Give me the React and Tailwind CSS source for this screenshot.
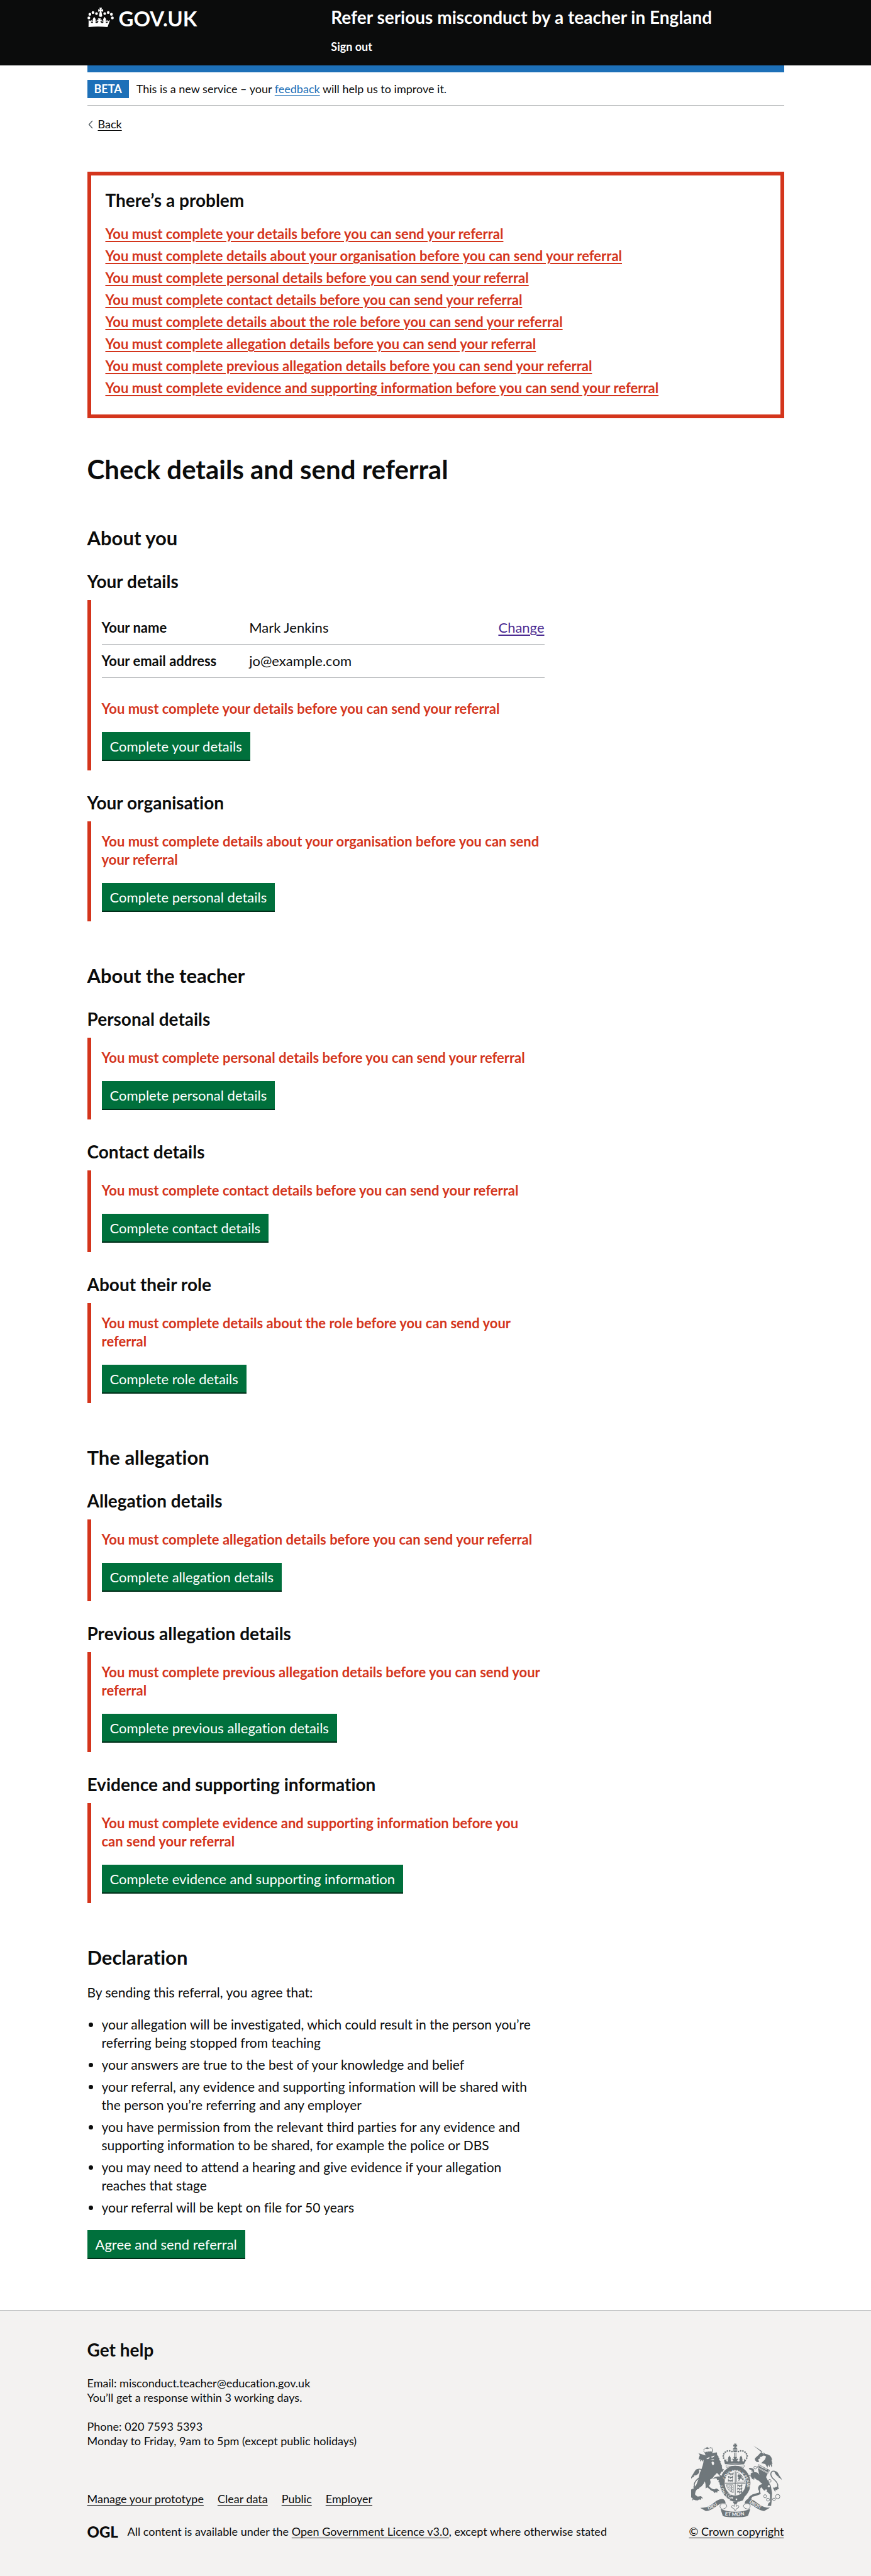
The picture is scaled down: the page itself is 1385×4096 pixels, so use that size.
import React from 'react';

const errors = [
  'You must complete your details before you can send your referral',
  'You must complete details about your organisation before you can send your referral',
  'You must complete personal details before you can send your referral',
  'You must complete contact details before you can send your referral',
  'You must complete details about the role before you can send your referral',
  'You must complete allegation details before you can send your referral',
  'You must complete previous allegation details before you can send your referral',
  'You must complete evidence and supporting information before you can\u00a0send your referral',
];

const sections = [
  {
    title: 'About you',
    parts: [
      {
        id: 'your-details',
        title: 'Your details',
        rows: [
          { key: 'Your name', value: 'Mark Jenkins', change: true },
          { key: 'Your email address', value: 'jo@example.com' },
        ],
        error: errors[0],
        action: 'Complete your details',
      },
      { id: 'your-organisation', title: 'Your organisation', error: errors[1], action: 'Complete personal details' },
    ],
  },
  {
    title: 'About the teacher',
    parts: [
      { id: 'personal-details', title: 'Personal details', error: errors[2], action: 'Complete personal details' },
      { id: 'contact-details', title: 'Contact details', error: errors[3], action: 'Complete contact details' },
      { id: 'their-role', title: 'About their role', error: errors[4], action: 'Complete role details' },
    ],
  },
  {
    title: 'The allegation',
    parts: [
      { id: 'allegation-details', title: 'Allegation details', error: errors[5], action: 'Complete allegation details' },
      { id: 'previous-allegation', title: 'Previous allegation details', error: errors[6], action: 'Complete previous allegation details' },
      { id: 'evidence', title: 'Evidence and supporting information', error: errors[7], action: 'Complete evidence and supporting information' },
    ],
  },
];

const partIds = sections.flatMap((section) => section.parts.map((part) => part.id));

const declarations = [
  'your allegation will be investigated, which could result in the person you’re referring being stopped from teaching',
  'your answers are true to the best of your knowledge and belief',
  'your referral, any evidence and supporting information will be shared with the person you’re referring and any employer',
  'you have permission from the relevant third parties for any evidence and supporting information to be shared, for example the police or DBS',
  'you may need to attend a hearing and give evidence if your allegation reaches that stage',
  'your referral will be kept on file for 50 years',
];

function Container({ className = '', children }) {
  return <div className={`mx-auto w-full max-w-[1140px] px-4 ${className}`}>{children}</div>;
}

function Crown() {
  return (
    <svg viewBox="60 62 216 161" className="h-[31px] w-[42px] shrink-0" fill="currentColor" aria-hidden="true">
      <g>
        <circle cx="71" cy="148" r="11.5" />
        <circle cx="79" cy="118" r="11.5" />
        <circle cx="105" cy="103" r="11.5" />
        <circle cx="134" cy="112" r="11" />
        <circle cx="202" cy="112" r="11" />
        <circle cx="231" cy="103" r="11.5" />
        <circle cx="257" cy="118" r="11.5" />
        <circle cx="265" cy="148" r="11.5" />
      </g>
      <path d="M158 63h21l-5 17 15-5v22l-15-5 7 35c1 8-5 12-13 12s-14-4-13-12l7-35-14 5V75l15 5z" />
      <path d="M69 164l14 10 9-10 4 14-9 4c6 10 14 11 18 2l1-6-10 2v-12l9 3c-1-9-5-10 1-18l9-14 9 14c6 8 2 9 1 18l9-3v12l-10-2 1 6c5 9 18 8 22-1l4-12-12 6v-16l12 5-5-15h24l-5 15 12-5v16l-12-6 4 12c4 9 17 10 22 1l1-6-10 2v-12l9 3c-1-9-5-10 1-18l9-14 9 14c6 8 2 9 1 18l9-3v12l-10-2 1 6c4 9 12 8 18-2l-9-4 4-14 9 10 13-10-21 59c-51-6-106-6-157 0z" />
    </svg>
  );
}

/* Bodies of the small lions passant in the first and last quarters of the shield. */
function Lion({ x, y }) {
  return (
    <path
      transform={`translate(${x} ${y})`}
      d="M2 6l7-5 7 4 5 3h16l2-6 8-3-2 6 3 9-5 2 2 9-6-1-2-6-9-1-3 8-6-1 1-8-7-4-2 8-6-1 3-9z"
    />
  );
}

function RoyalArms() {
  return (
    <svg viewBox="312 244 752 616" className="h-[118px] w-36 font-[Lato] font-bold" fill="#6f777b" aria-hidden="true">
      <defs>
        <path id="garter" d="M612 678a98 110 0 1 1 132 0" />
        <path id="scroll-left" d="M456 796q50-16 100-60" />
        <path id="scroll-middle" d="M592 842q86 14 174 -3" />
        <path id="scroll-right" d="M792 733q60 46 122 64" />
      </defs>

      {/* imperial crown */}
      <path d="M668 246h20l-4 12 10-4v18l-10-4 4 11h-20l4-11-10 4v-18l10 4z" />
      <path d="M659 296a18 16 0 0 1 37 0zM659 302h37l-6 16h-24zM668 322h6v38h-6zM681 322h6v38h-6z" />
      <g>
        {[[651, 312], [632, 307], [613, 308], [596, 317], [584, 331], [579, 349], [582, 367], [704, 312], [723, 307], [742, 308], [759, 317], [771, 331], [777, 349], [773, 367]].map(([cx, cy]) => (
          <circle key={`${cx}-${cy}`} cx={cx} cy={cy} r="7" />
        ))}
      </g>
      <path d="M583 376l12 6 8-10 2 18c4 8 14 6 14-4l-7-8 10-1-4-10 12-22 12 22-4 10 10 1-7 8c2 10 14 12 22 2l-8-5v-12l14 5-6-18h30l-6 18 14-5v12l-8 5c8 10 20 8 22-2l-7-8 10-1-4-10 12-22 12 22-4 10 10 1-7 8c0 10 10 12 14 4l2-18 8 10 12-6-22 42c-52-5-106-5-158 0z" />
      <path d="M606 424c45-8 98-8 144 0 6 8 4 16-4 20-44-14-94-14-138 0-8-4-8-14-2-20z" fill="none" stroke="#6f777b" strokeWidth="5" />

      {/* garter and shield */}
      <ellipse cx="678" cy="574" rx="107" ry="124" fill="none" stroke="#6f777b" strokeWidth="39" />
      <path d="M640 690q56 24 118-8l-16 36q-56 24-110-2z" />
      <path d="M606 668q22-14 36 6-24-6-20 14 6 16 22 4-4 22-30 12-16-14-8-36z" stroke="#f3f2f1" strokeWidth="4" />
      <circle cx="653" cy="697" r="7" fill="#f3f2f1" />
      <circle cx="688" cy="709" r="7" fill="#f3f2f1" />
      <text fontSize="32" fill="#f3f2f1">
        <textPath href="#garter" startOffset="24">HO   SOIT QUI MAL Y PENSE</textPath>
      </text>
      <path d="M592 572h172v6H592zM675 476h6v200h-6z" />
      <g>
        <Lion x={618} y={486} />
        <Lion x={614} y={514} />
        <Lion x={612} y={542} />
        <Lion x={690} y={584} />
        <Lion x={690} y={610} />
        <Lion x={690} y={636} />
      </g>
      <path d="M690 482q54 22 66 84h-66z" fill="none" stroke="#6f777b" strokeWidth="4" />
      <path d="M698 506l12-6 8 8 12-2 4 12-8 4 12 10 8 20-10-4-8-14-10 6-6 14-10 2 6-12-10-6 8-8-8-8z" />
      <path d="M604 588h58v66q-46-10-58-66zM614 594q14 36 40 52M626 594q10 26 30 36M638 594q6 12 18 20M648 592v56" fill="none" stroke="#6f777b" strokeWidth="4" />

      {/* lion supporter */}
      <g>
        {[[418, 308], [419, 295], [428, 286], [440, 287], [460, 284], [472, 281], [484, 283], [490, 293], [489, 306]].map(([cx, cy]) => (
          <circle key={`${cx}-${cy}`} cx={cx} cy={cy} r="4.5" />
        ))}
        <path d="M440 276l10-2-1 8 8-2v10l-12 2-7-6z" />
        <path d="M421 316l10 4 6-8 8 8 7-12 9 9 8-10 5 8 16-6-4 26q-26 0-54 10z" />
      </g>
      <path d="M432 344q42-20 94-24l2 22 14 12-6 2 14 20-8 0 18 24-6 2 16 32-4 0 6 26 12-2-10 22-10 0q-8 14-14 24 34 24 36 52l-2 48-12-12-8 6-8-14-10 2 4-14-12-6 4-18-14 0-6-14-32 4q24-22 52-18l12-2q-18-24-42-38l14 10q-26 24-36 44l-22 12q14 30-8 52 16 26 46 28l14-8q22 6 26 24l-14-4-4 16-14-4-6 8-12-14q-22-8-36-24l-14-10-14 10q2-36-6-60-16 42-64 64-22 24-16 48l20 14 28-4 18 20-16-2-4 14-14-4-10 8q-20 2-36-8l-10 10 2-22-10-2-6-26-8 2 8-22q-2-16 6-24l24-10q20-26 32-66l14-60q30-62 32-110l-12 18-2-18-16 16 2-22-14 6q2-20 10-36l-6-14-14-6z" />
      <path d="M440 368l26-10-6 14-18 4zM478 356l28-12-6 14-16 6zM482 400q12-12 20 4 4 20-10 20-10-4-10-24zM470 380l34-6-10 10z" fill="#f3f2f1" />
      <path d="M372 614q-36 0-34-28 2-24 34-50 34-24 36-50 0-28-28-28-10 0-22 8" fill="none" stroke="#6f777b" strokeWidth="8" />
      <path d="M376 460q-24-6-32 12-14 24-32 52v14q10-14 24-16l-2-10q30 2 46-28zM328 602l16 4 6-6q18 4 34-2l-8 24-32 8 6-12-16-2z" />

      {/* unicorn supporter */}
      <path d="M828 262l76 62 8 12 2-18 12 14q50 4 60 50l-8-2 10 36-8-4q8 20 0 32-2-16-14-26l-2 24-14-20-4 26-18-32-34-8 30-28q10-14 8-30l-18-4q-14 4-20 14l-12 10-10 4-4 14 6-2 2 12-18 2-16-16v-16l30-28 12-14q16-12 20-14z" />
      <path d="M880 358l16-2 4 8-10 4z" fill="#f3f2f1" />
      <path d="M872 420l92 48-12 24-90-48z" fill="none" stroke="#6f777b" strokeWidth="4" />
      <path d="M876 428l8 12 8-4 8 14 10-8 6 14 10-6 6 14 12-6 14 6-8 20-82-42z" />
      <path d="M866 452l82 44-14 28q20 38 40 74l10 60-4 70-4 36-16 0-14-2 8-20 14-12-2-62-28-26-22-8-22-26q-14 14-8 40l4 16q-26 14-70 24l-10 20-28 0 16-24 24-16 54-16q2-12-8-28-2-36 36-42-16-12-30-28-18-4-38-26l-8 16-12-8-8-16-22-12q10-6 16 0l6 8-2-20q8-10 22-10l-12-20-20-6-6-10q20-8 36 6l12 28q28-4 40 22z" />
      <g fill="#f3f2f1">
        <circle cx="957" cy="600" r="9" />
        <circle cx="934" cy="635" r="9" />
        <circle cx="965" cy="556" r="11" />
      </g>
      <g fill="none" stroke="#6f777b" strokeWidth="5">
        <circle cx="1031" cy="686" r="18" />
        <ellipse cx="1000" cy="709" rx="12" ry="10" />
        <ellipse cx="950" cy="712" rx="13" ry="12" />
        <ellipse cx="926" cy="684" rx="11" ry="14" />
        <ellipse cx="965" cy="556" rx="11" ry="12" />
        <ellipse cx="832" cy="528" rx="12" ry="14" />
        <ellipse cx="824" cy="470" rx="9" ry="12" />
        <ellipse cx="844" cy="446" rx="11" ry="12" />
      </g>
      <path d="M1006 620q26 4 26-26-2-24-32-50-30-24-26-50 6-24 32-18" fill="none" stroke="#6f777b" strokeWidth="8" />
      <path d="M1000 474q28 0 38 26 8 18 24 36v12q-10-18-24-18l2-8q-24-6-40-48zM990 612l18 0 6-6 20 0 8 18-12 0-4 10-12-6-4 20z" />

      {/* motto scroll */}
      <path d="M388 780l30-2q44-6 80-38 38-34 70-34 28 2 30 38l-22-4q-18 2-48 22-56 44-94 44z" />
      <path d="M968 778l-28 0q-40-8-78-38-38-34-70-34-30 2-36 38l26-2q18 2 46 22 58 42 90 42z" />
      <path d="M574 744q36 0 34 24-4 16-36 24-24-10-20-32 4-12 22-16zM782 744q-36 0-36 24 4 16 38 24 20-10 18-32-2-12-20-16z" fill="none" stroke="#6f777b" strokeWidth="5" />
      <path d="M556 788q60 26 122 24 66 2 126-24l-18 54q-4 16-108 16-92 0-104-14z" />
      <g fill="#f3f2f1" fontSize="36">
        <text><textPath href="#scroll-left">DIEU</textPath></text>
        <text fontSize="42"><textPath href="#scroll-middle">ET MON</textPath></text>
        <text><textPath href="#scroll-right">DROIT</textPath></text>
      </g>
      <path d="M662 728h34v10l-6 8h-22l-6-8z" />
      <path d="M678 742q14 16 8 26 20-16 22 2 0 12-12 12 0 6-10 6l-4 14h-8l-4-14q-10 0-10-6-12 0-12-12 2-18 22-2-6-10 8-26z" fill="none" stroke="#6f777b" strokeWidth="5" />
    </svg>
  );
}

function ActionButton({ children }) {
  return (
    <button type="button" className="block border-b-2 border-[#002d18] bg-[#00703c] px-[13px] pt-2 pb-[7px] text-[22px] leading-[29px] text-white">
      {children}
    </button>
  );
}

function Part({ part, first }) {
  return (
    <section aria-labelledby={part.id}>
      <h3 id={part.id} className={`${first ? 'mt-[33px]' : 'mt-[34px]'} text-[28px] leading-[35px] font-bold`}>
        {part.title}
      </h3>
      <div className={`mt-3 border-l-6 border-[#d4351c] pb-[15px] pl-[17px] ${part.rows ? 'pt-[18px]' : 'pt-[17px]'}`}>
        {part.rows && (
          <dl className="mb-[34px] text-[22px] leading-[29px]">
            {part.rows.map((row) => (
              <div key={row.key} className="flex border-b border-[#b1b4b6] pt-[11px] pb-3">
                <dt className="w-1/3 font-bold">{row.key}</dt>
                <dd className="flex-1">{row.value}</dd>
                {row.change && (
                  <dd>
                    <a href="#change" className="text-[#4c2c92] underline underline-offset-3">Change</a>
                  </dd>
                )}
              </div>
            ))}
          </dl>
        )}
        <p className="mb-[23px] text-[22px] leading-[29px] font-bold text-[#d4351c]">{part.error}</p>
        <ActionButton>{part.action}</ActionButton>
      </div>
    </section>
  );
}

export default function App() {
  return (
    <div className="bg-white font-[Lato,sans-serif] text-[#0b0c0c] [font-variant-ligatures:no-common-ligatures]">
      <header className="bg-[#0b0c0c] text-white">
        <Container className="grid grid-cols-[35%_1fr] pt-[10px] pb-[18px]">
          <a href="#home" className="flex items-start gap-2 pt-[2px]">
            <Crown />
            <span className="text-[33px] leading-[35px] font-bold">GOV.UK</span>
          </a>
          <div>
            <a href="#service" className="block text-[28px] leading-[35px] font-bold">
              Refer serious misconduct by a teacher in England
            </a>
            <nav className="mt-[18px] text-lg leading-[23px] font-bold">
              <a href="#sign-out">Sign out</a>
            </nav>
          </div>
        </Container>
      </header>

      <Container>
        <div className="h-[11px] bg-[#1d70b8]" />
        <div className="flex items-center gap-3 border-b border-[#b1b4b6] pt-3 pb-[11px] text-lg leading-[29px]">
          <strong className="bg-[#1d70b8] px-[11px] font-bold text-white">BETA</strong>
          <p>
            This is a new service – your{' '}
            <a href="#feedback" className="text-[#1d70b8] underline underline-offset-3">feedback</a> will help us to improve it.
          </p>
        </div>
        <a href="#back" className="mt-[18px] flex w-fit items-center gap-2 text-lg leading-[23px]">
          <svg viewBox="0 0 9 14" className="h-[14px] w-[9px]" fill="none" stroke="#505a5f" strokeWidth="1.3" aria-hidden="true">
            <path d="M8 1L2.500 7L8 13" />
          </svg>
          <span className="underline underline-offset-3">Back</span>
        </a>

        <main>
          <div role="alert" className="mt-16 border-6 border-[#d4351c] px-[23px] pt-[22px] pb-[28px]">
            <h2 className="text-[28px] leading-[35px] font-bold">There’s a problem</h2>
            <ul className="mt-[21px] flex flex-col gap-1.5 text-[22px] leading-[29px] font-bold text-[#d4351c]">
              {errors.map((error, i) => (
                <li key={error}>
                  <a href={`#${partIds[i]}`} className="underline underline-offset-3">{error}</a>
                </li>
              ))}
            </ul>
          </div>

          <div className="max-w-[727px]">
            <h1 className="mt-[58px] text-[42px] leading-[46px] font-bold">Check details and send referral</h1>

            {sections.map((section) => (
              <section key={section.title} className="mt-[68px]">
                <h2 className="text-[31px] leading-[37px] font-bold">{section.title}</h2>
                {section.parts.map((part, i) => (
                  <Part key={part.id} part={part} first={i === 0} />
                ))}
              </section>
            ))}

            <section className="mt-[68px] text-[21px] leading-[29px]">
              <h2 className="text-[31px] leading-[37px] font-bold">Declaration</h2>
              <p className="mt-[22px]">By sending this referral, you agree that:</p>
              <ul className="mt-[22px] mb-[22px] flex list-disc flex-col gap-1.5 pl-[23px]">
                {declarations.map((item) => (
                  <li key={item}>{item}</li>
                ))}
              </ul>
              <ActionButton>Agree and send referral</ActionButton>
            </section>
          </div>
        </main>
      </Container>

      <footer className="mt-[81px] border-t border-[#b1b4b6] bg-[#f3f2f1] pt-[45px] pb-[60px] text-lg leading-[23px]">
        <Container className="flex items-end justify-between">
          <div>
            <h2 className="text-[28px] leading-[35px] font-bold">Get help</h2>
            <p className="mt-6">
              Email: misconduct.teacher@education.gov.uk
              <br />
              You’ll get a response within 3 working days.
            </p>
            <p className="mt-[23px]">
              Phone: 020 7593 5393
              <br />
              Monday to Friday, 9am to 5pm (except public holidays)
            </p>
            <nav className="mt-[69px] flex gap-[22px]">
              {['Manage your prototype', 'Clear data', 'Public', 'Employer'].map((label) => (
                <a key={label} href="#footer" className="underline underline-offset-3">{label}</a>
              ))}
            </nav>
            <div className="mt-[29px] flex">
              <span className="w-16 text-2xl leading-[23px] font-black">OGL</span>
              <p>
                All content is available under the{' '}
                <a href="#licence" className="underline underline-offset-3">Open Government Licence v3.0</a>, except where otherwise stated
              </p>
            </div>
          </div>
          <a href="#copyright" className="flex flex-col items-center gap-[11px] underline underline-offset-3">
            <RoyalArms />
            © Crown copyright
          </a>
        </Container>
      </footer>
    </div>
  );
}
